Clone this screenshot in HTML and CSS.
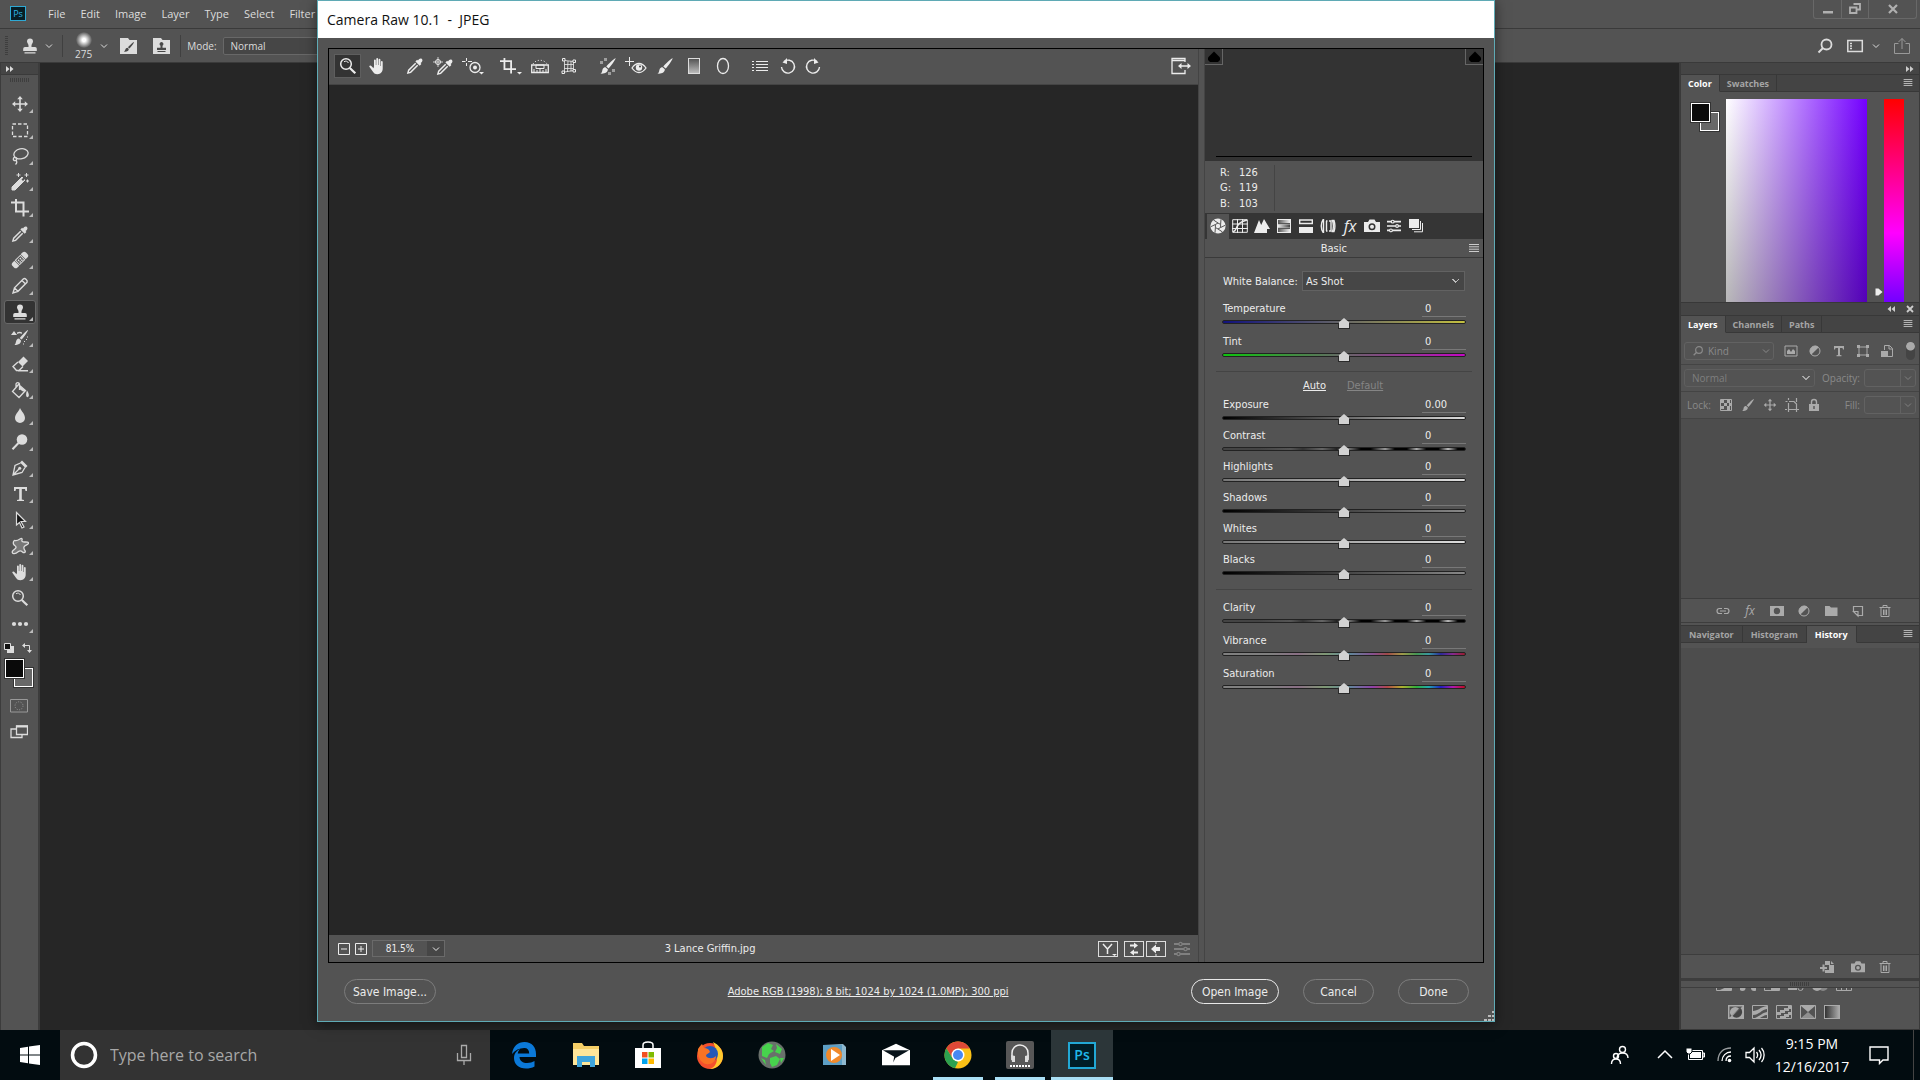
FILE: index.html
```html
<!DOCTYPE html>
<html lang="en">
<head>
  <meta charset="UTF-8" />
  <meta name="viewport" content="width=device-width, initial-scale=1.0" />
  <title>Camera Raw 10.1 - JPEG</title>
  <link rel="stylesheet" href="styles.css">
</head>
<body>
  <!-- shared icons -->
  <svg class="sprite" aria-hidden="true">
    <defs>
      <linearGradient id="g-right"><stop offset="0" stop-color="#eee"/><stop offset="1" stop-color="#444"/></linearGradient>
      <linearGradient id="g-left"><stop offset="0" stop-color="#555"/><stop offset="1" stop-color="#eee"/></linearGradient>
    </defs>
    <symbol id="i-chev" viewBox="0 0 8 8"><path d="M1 2.500l3 3 3-3" fill="none" stroke="currentColor"/></symbol>
    <symbol id="i-menu" viewBox="0 0 10 8"><path d="M0 .5h10M0 2.800h10M0 5.200h10M0 7.500h10" stroke="currentColor"/></symbol>
    <symbol id="i-fwd" viewBox="0 0 8 6"><path d="M0 0l3.500 3L0 6zM4 0l3.500 3L4 6z"/></symbol>
    <symbol id="i-stamp" viewBox="0 0 18 18"><path d="M9 1.500a3 3 0 0 1 3 3c0 1.600-1.500 2.300-1.500 4v1.500H14a1.800 1.800 0 0 1 1.800 1.800V14H2.200v-2.200A1.800 1.800 0 0 1 4 10h3.500V8.500c0-1.700-1.500-2.400-1.500-4a3 3 0 0 1 3-3zM3.500 15.300h11v1.300h-11z"/></symbol>
    <symbol id="i-move" viewBox="0 0 18 18"><path d="M9 1l2.800 3.200H9.800v4h4v-2L17 9l-3.200 2.800v-2h-4v4h2L9 17l-2.800-3.200h2v-4h-4v2L1 9l3.200-2.800v2h4v-4h-2z"/></symbol>
    <symbol id="i-drop" viewBox="0 0 18 18"><path d="M12 3.500c1-1.600 2.500-2.600 3.900-1.500 1.300 1.300.3 3-1.300 4.100l.8.900-1.700 1.700L9.400 4.400l1.700-1.700z"/><path d="M9.700 6.200l-7 7-.8 2.800 2.700-.6 7.100-7.100" fill="none" stroke="currentColor" stroke-width="1.500"/></symbol>
    <symbol id="i-hand" viewBox="0 0 18 18"><path d="M6 9.500V3.300a.9.9 0 0 1 1.800 0V8h.5V1.800a.9.9 0 0 1 1.800 0V8h.5V2.700a.9.9 0 0 1 1.800 0V9h.5V5a.9.9 0 0 1 1.800 0v6.500c0 3.400-2 5.700-5.200 5.700-2.600 0-3.900-1.300-5.100-3.300L1.200 9.500c.3-1.300 1.600-1.200 2.400-.3L5.500 11.200z"/></symbol>
    <symbol id="i-zoom" viewBox="0 0 18 18"><circle cx="7" cy="7" r="5.300" fill="none" stroke="currentColor" stroke-width="1.500"/><path d="M10.800 11l5.500 5.300" stroke="currentColor" stroke-width="2.200"/><path d="M5 4.800c1.500-1.200 3.700-.7 4.400 1.200" fill="none" stroke="currentColor"/></symbol>
    <symbol id="i-crop" viewBox="0 0 18 18"><path d="M0 3.500h12.500v14M5 0v12.500h13" fill="none" stroke="currentColor" stroke-width="2"/></symbol>
    <symbol id="i-brush" viewBox="0 0 18 18"><path d="M16.600 1.200c.6.500-5 8.600-7 10.300L7.300 9.400C9 7.300 16 .7 16.600 1.200zM6.500 10.200l2.300 2.100c.2 3-3.200 4.900-7.400 4.300 2.200-1.200 1.500-3 2.300-4.700.6-1.200 1.600-1.700 2.800-1.700z"/></symbol>
    <symbol id="i-trash" viewBox="0 0 14 14"><path d="M1.500 3.500h11M5 3V1.500h4V3M3 4v8.500h8V4M5.500 5.500V11M7 5.500V11M8.500 5.500V11" fill="none" stroke="currentColor"/></symbol>
    <symbol id="i-half" viewBox="0 0 14 14"><circle cx="7" cy="7" r="5" fill="none" stroke="currentColor"/><path d="M3.200 10.800A5.400 5.400 0 0 1 10.800 3.200z"/></symbol>
    <symbol id="i-sliders" viewBox="0 0 18 16"><path d="M1 3h5M9 3h8M1 8h10M14 8h3M1 13h3M7 13h10" stroke="currentColor" stroke-width="1.800"/><g fill="none" stroke="currentColor" stroke-width="1.300"><circle cx="7.500" cy="3" r="1.600"/><circle cx="12.500" cy="8" r="1.600"/><circle cx="5.500" cy="13" r="1.600"/></g></symbol>
    <symbol id="i-camera" viewBox="0 0 16 14"><path fill-rule="evenodd" d="M0 3h4l1.500-2.500h5L12 3h4v10H0zM8 4.300a3.500 3.500 0 1 0 0 7 3.500 3.500 0 0 0 0-7zm0 1.500a2 2 0 1 1 0 4 2 2 0 0 1 0-4z"/></symbol>
  </svg>

  <div class="desktop">
    <div class="app">
      <header class="menubar">
        <span class="ps-logo">Ps</span>
        <nav class="menus">
          <a href="#">File</a><a href="#">Edit</a><a href="#">Image</a><a href="#">Layer</a><a href="#">Type</a><a href="#">Select</a><a href="#">Filter</a>
        </nav>
        <div class="win-controls">
          <button aria-label="Minimize"><svg viewBox="0 0 12 12"><path d="M1 8h10v2.500H1z"/></svg></button>
          <button aria-label="Restore"><svg viewBox="0 0 12 12"><path d="M4.500 1h6.500v5.500H8M1 4.500h6.500v5.500H1z" fill="none" stroke="currentColor" stroke-width="1.800"/></svg></button>
          <button class="wide" aria-label="Close"><svg viewBox="0 0 12 12"><path d="M2 2l8 8M10 2l-8 8" stroke="currentColor" stroke-width="2.200"/></svg></button>
        </div>
      </header>

      <div class="options">
        <span class="grip-v"></span>
        <button class="opt-stamp" aria-label="Clone stamp presets"><svg class="ico"><use href="#i-stamp"/></svg><svg class="chev"><use href="#i-chev"/></svg></button>
        <span class="opt-sep"></span>
        <button class="opt-size" aria-label="Brush size"><span class="brush-size"><span class="brush-dot"></span>275</span><svg class="chev"><use href="#i-chev"/></svg></button>
        <button class="opt-tab" aria-label="Brush panel"><svg viewBox="0 0 18 18"><path d="M0 1h8l1.500 2H17v14H0z"/><path d="M14 5c.4.400-3 5.300-4.700 6.500L8 10.200C9.400 8.600 13.600 4.600 14 5zM7.500 10.800l1.300 1.300c0 2-2.300 3-4.900 2.600 1.600-.8 1.200-3.700 3.600-3.900z" fill="#484848"/></svg></button>
        <button class="opt-tab" aria-label="Clone source panel"><svg viewBox="0 0 18 18"><path d="M0 1h8l1.500 2H17v14H0z"/><path d="M8.500 5a2 2 0 0 1 1 3.700v2H13V13H4v-2.300h3.500v-2A2 2 0 0 1 8.500 5zM4.500 14h8v1h-8z" fill="#484848"/></svg></button>
        <span class="opt-sep"></span>
        <label for="mode">Mode:</label>
        <select id="mode" class="opt-mode"><option>Normal</option></select>
        <div class="opt-right">
          <button aria-label="Search"><svg class="ico" viewBox="0 0 18 18"><circle cx="10.500" cy="7.500" r="5" fill="none" stroke="currentColor" stroke-width="1.800"/><path d="M7 11l-4.500 4.500" stroke="currentColor" stroke-width="2"/></svg></button>
          <button class="opt-space" aria-label="Workspace"><svg class="ico" viewBox="0 0 18 18"><path d="M1.800 3.500h14.500v11H1.800z" fill="none" stroke="currentColor" stroke-width="1.500"/><path d="M4 6.500h2M4 9h2M4 11.500h2" stroke="currentColor" stroke-width="1.500"/></svg><svg class="chev"><use href="#i-chev"/></svg></button>
          <button class="dim" aria-label="Share"><svg class="ico" viewBox="0 0 18 18"><path d="M5.500 6.500h-4v10h15v-10h-4M9 12V1.500M5.500 5L9 1.500 12.500 5" fill="none" stroke="currentColor"/></svg></button>
        </div>
      </div>

      <div class="workspace">
        <aside class="toolbar">
          <button class="collapse" aria-label="Expand toolbar"><svg><use href="#i-fwd"/></svg></button>
          <span class="grip-h"></span>
          <div class="tools">
            <button aria-label="Move"><svg class="ico"><use href="#i-move"/></svg></button>
            <button aria-label="Marquee"><svg class="ico" viewBox="0 0 18 18"><path d="M1.500 3h15v12.500h-15z" fill="none" stroke="currentColor" stroke-width="1.300" stroke-dasharray="3.500 2"/></svg></button>
            <button aria-label="Lasso"><svg class="ico" viewBox="0 0 18 18"><g fill="none" stroke="currentColor" stroke-width="1.300"><ellipse cx="10" cy="6.800" rx="7.200" ry="5" transform="rotate(-12 10 6.800)"/><circle cx="4" cy="12" r="1.700"/><path d="M4.500 13.500c2 .5 1.500 2.500 0 4"/></g></svg></button>
            <button aria-label="Magic wand"><svg class="ico" viewBox="0 0 18 18"><path d="M11 4l3 3L4 17H1v-3zM7.500 0v4M5.500 2h4M15.500 0v4M13.500 2h4M16.500 6.500v3M15 8h3" stroke="currentColor" stroke-width="1"/><path d="M10.500 6.500l1.500 1.500L14 6l-1.500-1.500z" fill="#535353"/></svg></button>
            <button aria-label="Crop"><svg class="ico"><use href="#i-crop"/></svg></button>
            <button aria-label="Eyedropper"><svg class="ico"><use href="#i-drop"/></svg></button>
            <button aria-label="Healing brush"><svg class="ico" viewBox="0 0 18 18"><g transform="rotate(-45 9 9)"><path d="M2 5.500h2.500v7H2A2.500 2.500 0 0 1-.500 10V8A2.500 2.500 0 0 1 2 5.500zM16 5.500h-2.500v7H16a2.500 2.500 0 0 0 2.500-2.500V8A2.500 2.500 0 0 0 16 5.500z"/><path d="M5.500 6h7v6h-7z" fill="none" stroke="currentColor"/><path d="M7 7.500h1.500V9H7zM9.500 7.500H11V9H9.500zM7 9.700h1.500v1.500H7zM9.500 9.700H11v1.500H9.500z"/></g></svg></button>
            <button aria-label="Pencil"><svg class="ico" viewBox="0 0 18 18"><path d="M2 16l1.500-5.200 9-9c1.500-1 4.500 1.700 3.500 3.500l-9 9zM11 3.500L14.500 7M3.500 11L7 14.300" fill="none" stroke="currentColor" stroke-width="1.400"/></svg></button>
            <button class="on" aria-label="Clone stamp"><svg class="ico"><use href="#i-stamp"/></svg></button>
            <button aria-label="History brush"><svg class="ico" viewBox="0 0 18 18"><path d="M17 1c.5.500-4.500 8-6.500 9.500L8.700 9C10.300 7 16.500.5 17 1zM8 9.500l2 2c0 3-2.500 4.500-6.500 4.500 2.200-1.500.5-6 4.500-6.500zM0 6l3-4 3 4zM6 3.500c2-1.300 4-.8 5 0v1.300c-2-.9-3.500-.7-5 .2zM13 12h1v1h-1zM15 10h1v1h-1zM12 14.500h1v1h-1zM16 7.500h1v1h-1z"/></svg></button>
            <button aria-label="Eraser"><svg class="ico" viewBox="0 0 18 18"><path d="M7 7l5.500-5.500L17 6l-5.500 5.500z"/><path d="M7 7L2 11.500 5.500 15.500H8l4-4M7 15.800h10" fill="none" stroke="currentColor" stroke-width="1.400"/></svg></button>
            <button aria-label="Paint bucket"><svg class="ico" viewBox="0 0 18 18"><path d="M7.500 3.500l7 6-6.500 7-6.500-6zM5 6V3a1.800 1.800 0 0 1 3.500 0v6" fill="none" stroke="currentColor" stroke-width="1.300"/><path d="M9 5l6 5-3 .5-3-2zM16 9.500c2 3 2.500 5.500 1 6.500-1.800.8-2.700-2-1-6.500z"/></svg></button>
            <button aria-label="Blur"><svg class="ico" viewBox="0 0 18 18"><path d="M9 1c2 4 5 6.300 5 10a5 5 0 0 1-10 0c0-3.700 3.500-6 5-10z"/></svg></button>
            <button aria-label="Dodge"><svg class="ico" viewBox="0 0 18 18"><circle cx="11" cy="6.500" r="5.300"/><path d="M7.500 10l-6 6.300" stroke="currentColor" stroke-width="2"/></svg></button>
            <button aria-label="Pen"><svg class="ico" viewBox="0 0 18 18"><path d="M11 1.500L16.500 7l-2 2L9 3.500z"/><path d="M9.500 4L4 6.500 2 16l9-2.500L14 8.500M2.500 15.500L8 10" fill="none" stroke="currentColor" stroke-width="1.300"/><circle cx="8.700" cy="9.300" r="1.500"/></svg></button>
            <button aria-label="Type"><svg class="ico" viewBox="0 0 18 18"><path d="M3 2h13v4h-1.500L14 4h-3.200v10.500l2.200.4V16H6v-1.100l2.200-.4V4H5l-.5 2H3z"/></svg></button>
            <button aria-label="Path selection"><svg class="ico" viewBox="0 0 18 18"><path d="M5.500 1.500l9 9H10l3 5.500-2 1-2.500-5.500-3 2.500z" fill="#161616" stroke="currentColor" stroke-width="1.200"/></svg></button>
            <button aria-label="Custom shape"><svg class="ico" viewBox="0 0 18 18"><path d="M4 3.500c1.500.5 3.500-.5 5-1.500s2.500-.5 2 1 .5 2 2.500 2 4-.2 4 1.200-3 2-4 3-.5 3 .5 4.500-1 2.700-2.500 1.300-2.500-1.800-4-.5-3 2.300-4.500 2.200S.5 15 2 13.500s3.500-2 3-3.500-2-1.500-2.500-3S2.800 3.200 4 3.500z" fill="#777" stroke="currentColor" stroke-width="1.300"/></svg></button>
            <button aria-label="Hand"><svg class="ico"><use href="#i-hand"/></svg></button>
            <button class="plain" aria-label="Zoom"><svg class="ico"><use href="#i-zoom"/></svg></button>
            <button aria-label="Edit toolbar"><svg class="ico" viewBox="0 0 18 18"><circle cx="3" cy="9" r="2.100"/><circle cx="9" cy="9" r="2.100"/><circle cx="15" cy="9" r="2.100"/></svg></button>
          </div>
          <div class="swatch-tools">
            <button aria-label="Default colors"><svg viewBox="0 0 10 10"><path d="M3 3h7v7H3z"/><path d="M.5.500h6v6h-6z" fill="#111" stroke="#ddd"/></svg></button>
            <button aria-label="Swap colors"><svg viewBox="0 0 10 10"><path d="M2 2.500h5.500V8" fill="none" stroke="currentColor"/><path d="M0 2.500L3 0v5zM7.500 10L5 7h5z"/></svg></button>
          </div>
          <div class="swatches"><button class="fg" aria-label="Foreground color"></button><button class="bg" aria-label="Background color"></button></div>
          <button class="screen-btn dim" aria-label="Quick mask"><svg class="ico" viewBox="0 0 18 18"><path d="M.5 2.500h17v12.500H.5z" fill="none" stroke="currentColor"/><circle cx="9" cy="8.800" r="4" fill="none" stroke="currentColor" stroke-dasharray="1 1.500"/></svg></button>
          <button class="screen-btn" aria-label="Screen mode"><svg class="ico" viewBox="0 0 18 18"><path d="M6.500 3h11v8.500h-11zM6 6H1v8.500h11V12" fill="none" stroke="currentColor" stroke-width="1.300"/><path d="M6 2.500h12v2H6z"/></svg></button>
        </aside>

        <main class="canvas"></main>

        <aside class="panels">
          <div class="dock-head"><svg><use href="#i-fwd"/></svg></div>
          <div class="tabs"><button class="on">Color</button><button>Swatches</button><span class="fill"></span><svg class="menu-ico"><use href="#i-menu"/></svg></div>
          <div class="color-panel">
            <div class="swatches"><button class="fg" aria-label="Foreground"></button><button class="bg" aria-label="Background"></button></div>
            <div class="field"></div>
            <svg class="hue-mark" viewBox="0 0 8 8"><path d="M.5.500h3L7.500 4l-4 3.500h-3z"/></svg>
            <div class="hue"></div>
          </div>
          <div class="dock-head two"><svg class="flip"><use href="#i-fwd"/></svg><svg viewBox="0 0 8 8"><path d="M1 1l6 6M7 1L1 7" stroke="currentColor" stroke-width="1.800"/></svg></div>
          <div class="tabs"><button class="on">Layers</button><button>Channels</button><button>Paths</button><span class="fill"></span><svg class="menu-ico"><use href="#i-menu"/></svg></div>
          <div class="layer-row filter-row">
            <button class="kind"><svg viewBox="0 0 18 18"><circle cx="10.500" cy="7.500" r="5" fill="none" stroke="currentColor" stroke-width="1.800"/><path d="M7 11l-4.500 4.500" stroke="currentColor" stroke-width="2"/></svg>Kind<svg class="chev"><use href="#i-chev"/></svg></button>
            <div class="filters">
              <button aria-label="Pixel layers"><svg viewBox="0 0 14 14"><path d="M1 2h12v10H1z" fill="none" stroke="currentColor"/><path d="M3 10V7l2-2 2 3 2-3 2 2v3z"/></svg></button>
              <button aria-label="Adjustment layers"><svg><use href="#i-half"/></svg></button>
              <button aria-label="Type layers"><svg viewBox="0 0 14 14"><path d="M2 2h10v3.500h-1L10.500 4H8v7l1.500.3v1h-5v-1L6 11V4H3.500L3 5.500H2z"/></svg></button>
              <button aria-label="Shape layers"><svg viewBox="0 0 14 14"><path d="M3 3h8v8H3z" fill="none" stroke="currentColor"/><path d="M1 1h3v3H1zM10 1h3v3h-3zM1 10h3v3H1zM10 10h3v3h-3z"/></svg></button>
              <button aria-label="Smart objects"><svg viewBox="0 0 14 14"><path d="M4.500 6V1.500h5l3 3v8H8M9 1.500V5h3.500" fill="none" stroke="currentColor"/><path d="M1 7h7v6H1z"/></svg></button>
            </div>
            <span class="toggle"></span>
          </div>
          <div class="layer-row">
            <select class="blend" aria-label="Blend mode"><option>Normal</option></select>
            <label for="opacity">Opacity:</label>
            <span class="num"><input id="opacity" type="text"><svg class="chev"><use href="#i-chev"/></svg></span>
          </div>
          <div class="layer-row">
            <span class="lock-label">Lock:</span>
            <div class="locks">
              <button aria-label="Lock transparency"><svg viewBox="0 0 14 14"><path d="M1.500 1.500h11v11h-11z" fill="none" stroke="currentColor"/><path d="M2 2h3v3H2zM8 2h3v3H8zM5 5h3v3H5zM10 5h2v3h-2zM2 8h3v3H2zM8 8h3v4H8z"/></svg></button>
              <button aria-label="Lock pixels"><svg><use href="#i-brush"/></svg></button>
              <button aria-label="Lock position"><svg><use href="#i-move"/></svg></button>
              <button aria-label="Lock artboard"><svg viewBox="0 0 14 14"><path d="M3.500 0v2M.500 3.500h2M3.500 5v6.500h8V6L9 3.500H4M11.500 0v4M3.500 12v2M11.500 12v2M12 11.500h2M0 11.500h2" fill="none" stroke="currentColor" stroke-width="1.200"/></svg></button>
              <button aria-label="Lock all"><svg viewBox="0 0 14 14"><path fill-rule="evenodd" d="M2 6h10v7H2zm4.300 2v3h1.400V8z"/><path d="M4.500 6V4a2.500 2.500 0 0 1 5 0v2" fill="none" stroke="currentColor" stroke-width="1.400"/></svg></button>
            </div>
            <label class="fill-label" for="fill">Fill:</label>
            <span class="num"><input id="fill" type="text"><svg class="chev"><use href="#i-chev"/></svg></span>
          </div>
          <div class="layer-list"></div>
          <div class="panel-foot">
            <button aria-label="Link layers"><svg viewBox="0 0 14 14"><path d="M6 4.500H3.500a2.500 2.500 0 0 0 0 5H6M8 4.500h2.500a2.500 2.500 0 0 1 0 5H8M4 7h6" fill="none" stroke="currentColor" stroke-width="1.200"/></svg></button>
            <button class="fx" aria-label="Layer style">fx</button>
            <button aria-label="Layer mask"><svg viewBox="0 0 14 14"><path fill-rule="evenodd" d="M0 2h14v10H0zM7 3.800a3.200 3.200 0 1 0 0 6.400 3.200 3.200 0 0 0 0-6.400z"/></svg></button>
            <button aria-label="Adjustment layer"><svg><use href="#i-half"/></svg></button>
            <button aria-label="New group"><svg viewBox="0 0 14 14"><path d="M1 2h4.500L7 3.500h6.500V12H1z"/></svg></button>
            <button aria-label="New layer"><svg viewBox="0 0 14 14"><path d="M2.500 7V2.500h9v9H7M2.500 7.500H7V12z" fill="none" stroke="currentColor" stroke-width="1.200"/></svg></button>
            <button aria-label="Delete layer"><svg><use href="#i-trash"/></svg></button>
          </div>
          <div class="tabs gap-top"><button>Navigator</button><button>Histogram</button><button class="on">History</button><span class="fill"></span><svg class="menu-ico"><use href="#i-menu"/></svg></div>
          <div class="history-list"></div>
          <div class="panel-foot history-foot">
            <button class="new-doc" aria-label="New document from state"><svg viewBox="0 0 14 14"><path d="M5 1h5v4h4v8H5v-3h4V5H5zM11 1l3 3h-3z"/><path d="M0 8h7M3.500 4.500v7" stroke="currentColor" stroke-width="2"/></svg></button>
            <button aria-label="New snapshot"><svg><use href="#i-camera"/></svg></button>
            <button aria-label="Delete state"><svg><use href="#i-trash"/></svg></button>
          </div>
          <div class="dock-grip"><span class="grip-h"></span></div>
          <div class="adjustments">
            <div class="adj-row">
              <svg viewBox="0 0 16 14"><path d="M.5.500h15v13H.5z" fill="none" stroke="currentColor"/><path d="M4 13l11-5v5z"/></svg>
              <svg viewBox="0 0 16 14"><circle cx="2.500" cy="11" r="3"/><circle cx="14" cy="11" r="3"/></svg>
              <svg viewBox="0 0 16 14"><path d="M.5.500h15v13H.5z" fill="none" stroke="currentColor"/><path d="M7 5h8v8H7z"/></svg>
              <svg viewBox="0 0 16 14"><path d="M0 11h9v2H0z"/><circle cx="12.500" cy="11" r="2.500" fill="none" stroke="currentColor"/></svg>
              <svg viewBox="0 0 16 14"><circle cx="5" cy="9" r="5"/><circle cx="11" cy="9" r="5" opacity=".6"/></svg>
              <svg viewBox="0 0 16 14"><path d="M.5.500h15v13H.5zM5.500 0v14M10.500 0v14M0 7h16" fill="none" stroke="currentColor"/></svg>
            </div>
            <div class="adj-row">
              <svg viewBox="0 0 16 14"><path fill-rule="evenodd" d="M0 0h16v14H0zM1.500 1.500v11L14.500 1.500z"/><path d="M3.500 11A5 5 0 0 1 11 3.500z"/><path d="M12.500 3A5.500 5.500 0 0 1 4.500 11z" fill="#444"/></svg>
              <svg viewBox="0 0 16 14"><path d="M.5.500h15v13H.5z" fill="none" stroke="currentColor"/><path d="M1 6c5 0 7-4 14-5v3C9 5 7 10 1 10zM3 13c5-2 7-5 12-6v3c-3 0-5 2-7 3z"/></svg>
              <svg viewBox="0 0 16 14"><path d="M.5.500h15v13H.5z" fill="none" stroke="currentColor"/><path d="M1 7h3V5h4V3h4V1h3v3h-2v2H9v2H5v2H1zM4 13v-2h4V9h4V7h3v3h-2v2h-3v1z"/></svg>
              <svg viewBox="0 0 16 14"><path d="M.5.500h15v13H.5z" fill="none" stroke="currentColor"/><path d="M1 1h14L8 7z"/><path d="M1 13h14L8 7z" opacity=".7"/></svg>
              <span class="grad-map"></span>
            </div>
          </div>
        </aside>
      </div>

      <!-- Camera Raw dialog -->
      <section class="dialog" aria-label="Camera Raw">
        <h1 class="dialog-title">Camera Raw 10.1&nbsp; -&nbsp; JPEG</h1>
        <div class="frame">
          <div class="preview">
            <div class="raw-tools">
              <div class="group">
                <button class="on" aria-label="Zoom"><svg class="ico"><use href="#i-zoom"/></svg></button>
                <button aria-label="Hand"><svg class="ico"><use href="#i-hand"/></svg></button>
              </div>
              <div class="group">
                <button aria-label="White balance"><svg class="ico"><use href="#i-drop"/></svg></button>
                <button aria-label="Color sampler"><svg class="ico wide" viewBox="0 0 22 18"><use href="#i-drop" x="3" y="1" width="18" height="18"/><circle cx="5" cy="5" r="2.500" fill="none" stroke="currentColor"/><path d="M5 0v10M0 5h10" stroke="currentColor" stroke-width=".8"/></svg></button>
                <button aria-label="Targeted adjustment"><svg class="ico wide" viewBox="0 0 22 18"><path d="M4.500 1v3M4.500 6v3M0 4.500h3.500M6 4.500h4" stroke="currentColor"/><circle cx="13" cy="10.500" r="5" fill="none" stroke="currentColor" stroke-width="1.300"/><circle cx="13" cy="10.500" r="2"/><path d="M17 15h5l-2.500 2.500z"/></svg></button>
              </div>
              <div class="group">
                <button aria-label="Crop"><svg class="ico wide" viewBox="0 0 22 18"><use href="#i-crop" y="1" width="16" height="16"/><path d="M17 15h5l-2.500 2.500z"/></svg></button>
                <button aria-label="Straighten"><svg class="ico" viewBox="0 0 18 18"><path d="M.7 8h16.600v7.500H.7z" fill="none" stroke="currentColor" stroke-width="1.300"/><path d="M5 8h8v3.500H5zM3 12v3M6 13v2M9 12v3M12 13v2M15 12v3" fill="none" stroke="currentColor"/><path d="M2 7C5 2 13 2 16 7" fill="none" stroke="currentColor" stroke-dasharray="1 2"/></svg></button>
                <button aria-label="Transform"><svg class="ico" viewBox="0 0 18 18"><path d="M4.500 3.500l9 1v9l-9 1.500zM8 4L7.500 15M11 4v10.500M4.500 7.500h9M4.500 11.500h9" fill="none" stroke="currentColor" stroke-width=".8"/><path d="M2.500 1.500H5v2.500H2.500zM13 3h2.500v2.500H13zM2 14h2.500v2.500H2zM13 12.500h2.500V15H13z" fill="#535353" stroke="currentColor"/></svg></button>
              </div>
              <div class="group">
                <button aria-label="Spot removal"><svg class="ico" viewBox="0 0 18 18"><use href="#i-brush" x="1"/><path d="M2 4h3v3H2zM6 1h3v3H6zM14 12h3v3h-3zM10 15h3v3h-3z" opacity=".5"/></svg></button>
                <button aria-label="Red eye"><svg class="ico wide" viewBox="0 0 22 18"><path d="M4.500 0v9M0 4.500h9" stroke="currentColor"/><path d="M7 11c4-6 10-6 14 0-4 6-10 6-14 0z" fill="none" stroke="currentColor" stroke-width="1.300"/><circle cx="14" cy="10.500" r="3.200"/><circle cx="15" cy="9.500" r="1" fill="#444"/></svg></button>
                <button aria-label="Adjustment brush"><svg class="ico"><use href="#i-brush"/></svg></button>
                <button aria-label="Graduated filter"><span class="grad-ico"></span></button>
                <button aria-label="Radial filter"><svg class="ico" viewBox="0 0 18 18"><ellipse cx="9" cy="9" rx="5.500" ry="7.500" fill="none" stroke="currentColor" stroke-width="1.300"/></svg></button>
              </div>
              <div class="group">
                <button class="mid" aria-label="Preferences"><svg class="ico" viewBox="0 0 18 18"><path d="M1 4.500h2M5 4.500h12M1 7.500h2M5 7.500h12M1 10.500h2M5 10.500h12M1 13.500h2M5 13.500h12" stroke="currentColor" stroke-width="1.200"/></svg></button>
                <button aria-label="Rotate left"><svg class="ico" viewBox="0 0 18 18"><path d="M5 4.500A6.500 6.500 0 1 1 2.500 10" fill="none" stroke="currentColor" stroke-width="1.400"/><path d="M3.500 5.500L8 1v6z"/></svg></button>
                <button class="tight" aria-label="Rotate right"><svg class="ico" viewBox="0 0 18 18"><path d="M13 4.500A6.500 6.500 0 1 0 15.500 10" fill="none" stroke="currentColor" stroke-width="1.400"/><path d="M14.500 5.500L10 1v6z"/></svg></button>
              </div>
              <button class="full" aria-label="Full screen"><svg class="ico wide" viewBox="0 0 20 18"><path d="M14 5V1.500H1v15h13V13M1 3.500h13M8 9h9" fill="none" stroke="currentColor" stroke-width="1.300"/><path d="M7 9l3.500-3v6zM20 9l-3.500-3v6z"/></svg></button>
            </div>
            <div class="image-area"></div>
            <div class="status">
              <div class="zoom-ctl">
                <button class="step" aria-label="Zoom out"><svg viewBox="0 0 12 12"><path d="M.5.500h11v11H.5zM3 6h6" fill="none" stroke="currentColor"/></svg></button>
                <button class="step" aria-label="Zoom in"><svg viewBox="0 0 12 12"><path d="M.5.500h11v11H.5zM3 6h6M6 3v6" fill="none" stroke="currentColor"/></svg></button>
                <span class="zoom-box"><input type="text" value="81.5%" aria-label="Zoom level"><button aria-label="Zoom presets"><svg class="chev"><use href="#i-chev"/></svg></button></span>
              </div>
              <span class="file-name">3 Lance Griffin.jpg</span>
              <div class="compare">
                <button class="boxed" aria-label="Before and after view"><svg viewBox="0 0 18 14"><path d="M4 2l4.500 5v5M13 2L8.500 7" fill="none" stroke="currentColor" stroke-width="1.500"/><path d="M13 12h5l-2.500 2z"/></svg></button>
                <button class="boxed" aria-label="Swap settings"><svg viewBox="0 0 18 14"><path d="M5 2.500h4V.5l4 3-4 3v-2H5zM13 9.500H9v-2l-4 3 4 3v-2h4z"/></svg></button>
                <button class="boxed" aria-label="Copy settings"><svg viewBox="0 0 18 14"><path d="M9 0v2M9 12v2" stroke="currentColor"/><path d="M4 7l5-4.500V5h4v4H9v2.500z"/></svg></button>
                <button class="off" aria-label="Toggle settings"><svg><use href="#i-sliders"/></svg></button>
              </div>
            </div>
          </div>

          <div class="side">
            <div class="histogram">
              <button class="clip" aria-label="Shadow clipping"><svg viewBox="0 0 16 14"><path d="M8 1.500l6 6v2.500l-2 2H4l-2-2V7.500z" fill="#000"/></svg></button>
              <button class="clip right" aria-label="Highlight clipping"><svg viewBox="0 0 16 14"><path d="M8 1.500l6 6v2.500l-2 2H4l-2-2V7.500z" fill="#000"/></svg></button>
              <div class="base-line"></div>
            </div>
            <div class="readout">
              <dl>
                <dt>R:</dt><dd>126</dd>
                <dt>G:</dt><dd>119</dd>
                <dt>B:</dt><dd>103</dd>
              </dl>
            </div>
            <div class="raw-tabs">
              <button class="on" aria-label="Basic"><svg viewBox="0 0 16 16"><circle cx="8" cy="8" r="7.600"/><path d="M8 5L3.500 2M10.600 6.500L11 1.200M10.600 9.500l4.600-2.200M8 11l4.500 3M5.400 9.500L5 14.800M5.400 6.500L.8 8.700M8 5l2.600 1.500v3L8 11 5.400 9.500v-3z" fill="none" stroke="#535353"/></svg></button>
              <button aria-label="Tone curve"><svg viewBox="0 0 16 14"><path d="M.7.700h14.600v12.600H.7zM5.500 0v14M10.500 0v14M0 5h16M0 9.500h16" fill="none" stroke="currentColor"/><path d="M1 13c3-1 3-4 5-7s5-4 9-5" fill="none" stroke="currentColor" stroke-width="1.500"/></svg></button>
              <button aria-label="Detail"><svg viewBox="0 0 16 14"><path d="M0 14L5 1l2.200 5L10 0l6 10h-3v4z"/></svg></button>
              <button aria-label="HSL"><svg viewBox="0 0 16 14"><path d="M1 0h14v14H1z"/><path d="M2 1h12v3H2zM2 10h12v3H2z" fill="url(#g-left)"/><path d="M2 5.500h12v3H2z" fill="url(#g-right)"/><path d="M2 4.700h12M2 9.300h12" stroke="#353535"/></svg></button>
              <button aria-label="Split toning"><svg viewBox="0 0 16 14"><path d="M1.700 1h12.600v3.500H1.700z" fill="none" stroke="currentColor" stroke-width="1.400"/><path d="M1 8h14v6H1z"/></svg></button>
              <button aria-label="Lens corrections"><svg viewBox="0 0 16 14"><path d="M3.500 0C.5 4 .5 10 3.500 14V0zM6 2h1.500M6 12h1.500M6.500 2v10M9 2h2v10H9M12.500 1.500h1.500c1 3 1 8 0 11h-1.500c1-3 1-8 0-11z" fill="none" stroke="currentColor" stroke-width="1.400"/></svg></button>
              <button class="fx" aria-label="Effects">fx</button>
              <button aria-label="Calibration"><svg><use href="#i-camera"/></svg></button>
              <button aria-label="Presets"><svg><use href="#i-sliders"/></svg></button>
              <button aria-label="Snapshots"><svg viewBox="0 0 16 14"><path d="M1 0h10v9H1z"/><path d="M12.500 2v8.500H4M14.500 4v8.800H6" fill="none" stroke="currentColor"/></svg></button>
            </div>
            <h2 class="side-title"><span>Basic</span><svg class="menu-ico"><use href="#i-menu"/></svg></h2>

            <form class="basic">
              <div class="wb"><label for="wb">White Balance:</label><select id="wb"><option>As Shot</option></select></div>
              <div class="set roomy">
                <div class="slider"><label for="temp">Temperature</label><input type="text" value="0" aria-label="Temperature value"><input class="t-temp" id="temp" type="range" min="-100"></div>
                <div class="slider"><label for="tint">Tint</label><input type="text" value="0" aria-label="Tint value"><input class="t-tint" id="tint" type="range" min="-100"></div>
              </div>
              <div class="presets"><a href="#">Auto</a><a href="#" class="off">Default</a></div>
              <div class="set">
                <div class="slider"><label for="expo">Exposure</label><input type="text" value="0.00" aria-label="Exposure value"><input class="t-expo" id="expo" type="range" min="-100"></div>
                <div class="slider"><label for="contrast">Contrast</label><input type="text" value="0" aria-label="Contrast value"><input class="t-wave" id="contrast" type="range" min="-100"></div>
                <div class="slider"><label for="high">Highlights</label><input type="text" value="0" aria-label="Highlights value"><input class="t-light" id="high" type="range" min="-100"></div>
                <div class="slider"><label for="shadow">Shadows</label><input type="text" value="0" aria-label="Shadows value"><input class="t-dark" id="shadow" type="range" min="-100"></div>
                <div class="slider"><label for="whites">Whites</label><input type="text" value="0" aria-label="Whites value"><input class="t-light" id="whites" type="range" min="-100"></div>
                <div class="slider"><label for="blacks">Blacks</label><input type="text" value="0" aria-label="Blacks value"><input class="t-dark" id="blacks" type="range" min="-100"></div>
              </div>
              <div class="set roomy last">
                <div class="slider"><label for="clarity">Clarity</label><input type="text" value="0" aria-label="Clarity value"><input class="t-wave" id="clarity" type="range" min="-100"></div>
                <div class="slider"><label for="vib">Vibrance</label><input type="text" value="0" aria-label="Vibrance value"><input class="t-vib" id="vib" type="range" min="-100"></div>
                <div class="slider"><label for="sat">Saturation</label><input type="text" value="0" aria-label="Saturation value"><input class="t-sat" id="sat" type="range" min="-100"></div>
              </div>
            </form>
          </div>
        </div>

        <footer class="dialog-foot">
          <button class="pill">Save Image...</button>
          <a class="workflow" href="#">Adobe RGB (1998); 8 bit; 1024 by 1024 (1.0MP); 300 ppi</a>
          <div class="actions">
            <button class="pill main">Open Image</button>
            <button class="pill">Cancel</button>
            <button class="pill">Done</button>
          </div>
        </footer>
        <svg class="resize" viewBox="0 0 10 10"><path d="M8 0h2v2H8zM4 4h3v2H4zM8 4h2v2H8zM0 8h3v2H0zM4 8h3v2H4zM8 8h2v2H8z"/></svg>
      </section>
    </div>

    <footer class="taskbar">
      <button class="start" aria-label="Start"><svg viewBox="0 0 20 20"><path d="M0 3l8-1.200v7.700H0zM9 1.600L20 0v9.500H9zM0 10.500h8v7.700L0 17zM9 10.500h11V20L9 18.400z"/></svg></button>
      <label class="search"><svg viewBox="0 0 28 28"><circle cx="14" cy="14" r="11.500" fill="none" stroke="#fff" stroke-width="3.500"/></svg><input type="text" placeholder="Type here to search" aria-label="Search"><svg class="mic" viewBox="0 0 16 22"><path d="M5.500 1.500h5v12h-5zM1.500 9v7.500h13V9M8 16.500V21" fill="none" stroke="currentColor" stroke-width="1.300"/></svg></label>
      <div class="apps">
        <button aria-label="Edge"><svg viewBox="0 0 28 28"><path d="M2 13C3 5 8 1 14.500 1 22 1 26 6 26 13v3H9.500c.3 4 3.500 6 7.500 6 3 0 5.500-.8 7.500-2v5.500C22 27 19 27.500 16 27.500 8.500 27.500 4 23 4 17c0-4 2.500-7.500 6-9-1.500 1.500-2 3-2.300 4.500h11.500c0-3.500-1.700-5.500-5-5.500C9.500 7 5 9 2 13z" fill="#0b79d8"/></svg></button>
        <button aria-label="File Explorer"><svg viewBox="0 0 28 28"><path d="M1 2h9l2 3h15v19H1z" fill="#f5cf67"/><path d="M1 8h26v16H1z" fill="#ffe699"/><path d="M5 15h18v11h-5v-5h-8v5H5z" fill="#3fa5dc"/></svg></button>
        <button aria-label="Store"><svg viewBox="0 0 28 28"><path d="M9 8V4c0-4 10-4 10 0v4" fill="none" stroke="#fff" stroke-width="1.500"/><path d="M1 7h26v20H1z" fill="#fff"/><path d="M8 11h5.500v5.500H8z" fill="#f25022"/><path d="M14.500 11H20v5.500h-5.500z" fill="#7fba00"/><path d="M8 17.500h5.500V23H8z" fill="#00a4ef"/><path d="M14.500 17.500H20V23h-5.500z" fill="#ffb900"/></svg></button>
        <button aria-label="Firefox"><svg viewBox="0 0 28 28"><circle cx="14" cy="15" r="13" fill="#f4502c"/><path d="M17 1c6 3 10 8 10 14 0 7-6 13-13 13 9-3 9-15 3-27z" fill="#ffca2e"/><circle cx="14" cy="13" r="8" fill="#2458b8"/><path d="M2 8c2-3 3-4 4-5l2 4c3 0 5 1 6 4-2 2-4 2-4 4 2 3 7 3 10 0 0 6-5 9-10 8S1 16 2 8z" fill="#f97325"/></svg></button>
        <button aria-label="Globe"><svg viewBox="0 0 28 28"><circle cx="14" cy="14" r="13.500" fill="#69706b"/><path d="M4 6l6-4 5 2-2 4 3 2-5 3-2 4-5-2zM18 3l6 5-2 5-5-2 2-4zM12 17l6-2 4 3-3 6-5 2-2-4zM3 17l4 2 1 5zM22 17h4l-3 5z" fill="#47d34d"/></svg></button>
        <button aria-label="Media Player"><svg viewBox="0 0 28 28"><path d="M3 4l20-1 3 3v18H6l-3-1z" fill="#8fb9cf"/><path d="M3 4h19v20H3z" fill="#5d9fc5"/><circle cx="14" cy="14" r="8" fill="#f18a2b"/><path d="M11 8l9 6-9 6z" fill="#fff"/></svg></button>
        <button aria-label="Mail"><svg viewBox="0 0 30 28"><path d="M0 9L15 2l15 7v16H0z" fill="#fff"/><path d="M1 9h28l-14 8zM15 16l-3 6 1-6z" fill="#07131a"/></svg></button>
        <button class="open" aria-label="Chrome"><svg viewBox="0 0 28 28"><circle cx="14" cy="14" r="13.500" fill="#fbc116"/><path d="M2.300 7.200A13.500 13.500 0 0 1 25.700 7.500H14L8.500 17z" fill="#df4937"/><path d="M2.300 7.200L9 18l5 3-3 6.200A13.500 13.500 0 0 1 2.300 7.200z" fill="#2ca150"/><circle cx="14" cy="14" r="6.500" fill="#fff"/><circle cx="14" cy="14" r="5" fill="#4788f2"/></svg></button>
        <button class="open" aria-label="Music"><svg viewBox="0 0 28 28"><rect width="28" height="28" rx="2" fill="#575757"/><path d="M6 19V12a8 8 0 0 1 16 0v7" fill="none" stroke="#eee" stroke-width="1.500"/><path d="M5 14l4 1v6H6zM23 14l-4 1v6h3z" fill="#ddd"/><path d="M4 25h20" stroke="#fff" stroke-width="2" stroke-dasharray="2 1"/></svg></button>
        <button class="open active" aria-label="Photoshop"><span class="ps-app">Ps</span></button>
      </div>
      <div class="tray">
        <button aria-label="People"><svg viewBox="0 0 20 20"><g fill="none" stroke="#fff" stroke-width="1.400"><circle cx="12.500" cy="4.500" r="3"/><path d="M7 14c0-4 2-6 5.500-6S18 10 18 13"/><circle cx="6" cy="11" r="2.500"/><path d="M1.500 19c0-3.500 1.500-5 4.500-5s4.500 1.500 4.500 5"/></g></svg></button>
        <button aria-label="Hidden icons"><svg viewBox="0 0 20 20"><path d="M3 13l7-7 7 7" fill="none" stroke="#fff" stroke-width="1.500"/></svg></button>
        <button aria-label="Battery"><svg viewBox="0 0 20 20"><path d="M3.500 5.500h14v9h-14zM18 8h1.500v4H18z" fill="none" stroke="#fff"/><path d="M5 7h11v6H5z"/><path d="M1 3h6v4l-2 2H3L1 7z" fill="#fff" stroke="#020c10"/></svg></button>
        <button aria-label="Wi-Fi"><svg viewBox="0 0 20 20"><g fill="none" stroke="#fff" stroke-width="1.300"><path d="M3 16C3 8 8 3 16 3" opacity=".6"/><path d="M7 16c0-5 4-9 9-9M11 16c0-3 2-5 5-5"/></g><circle cx="14.500" cy="15.500" r="1.800" fill="#fff"/></svg></button>
        <button aria-label="Volume"><svg viewBox="0 0 20 20"><path d="M1 7.500h3.500L9 3v14l-4.500-4.500H1zM11.500 7c1.500 2 1.500 4 0 6M14 5c2.500 3 2.500 7 0 10M16.500 3c3.500 4 3.500 10 0 14" fill="none" stroke="#fff" stroke-width="1.300"/></svg></button>
      </div>
      <div class="clock"><span>9:15 PM</span><span>12/16/2017</span></div>
      <button class="notify" aria-label="Notifications"><svg viewBox="0 0 20 20"><path d="M1 2h18v13h-5l-3.500 3.500V15H1z" fill="none" stroke="#fff" stroke-width="1.400"/></svg></button>
    </footer>
  </div>
</body>
</html>
```
FILE: styles.css
```css
* {
  box-sizing: border-box;
}
body {
  margin: 0;
  font-family: 'Open Sans', 'Noto Sans', sans-serif;
  font-size: 11px;
  color: #dcdcdc;
  background: #262626;
}
button, input, select {
  font: inherit;
  color: inherit;
  margin: 0;
  padding: 0;
  border: 0;
  border-radius: 0;
  background: none;
  outline: none;
}
button {
  display: flex;
  align-items: center;
  justify-content: center;
  flex: none;
}
svg {
  fill: currentColor;
  display: block;
  flex: none;
}
a {
  color: inherit;
}
input {
  min-width: 0;
}
select {
  appearance: none;
}
.sprite {
  position: absolute;
  width: 0;
  height: 0;
}
.ico {
  width: 18px;
  height: 18px;
}
.ico.wide {
  width: 22px;
}
.chev {
  width: 8px;
  height: 8px;
}
.dim {
  color: #999;
}
.desktop {
  height: 100vh;
  display: flex;
  flex-direction: column;
}
.app {
  flex: 1;
  min-height: 0;
  display: flex;
  flex-direction: column;
  position: relative;
}

/* menu bar */
.menubar {
  height: 28px;
  display: flex;
  align-items: center;
  background: #535353;
  padding: 0 3px 2px 10px;
}
.ps-logo {
  width: 16px;
  height: 15px;
  border: 1px solid #2fa9d4;
  background: #071e26;
  color: #2fb4e4;
  font-size: 9px;
  line-height: 13px;
  text-align: center;
}
.menus {
  display: flex;
  gap: 15px;
  margin-left: 22px;
}
.menus a {
  text-decoration: none;
}
.win-controls {
  display: flex;
  align-self: flex-start;
  margin-left: auto;
  border: 1px solid #686868;
  border-top: 0;
  border-radius: 0 0 3px 3px;
  color: #b0b0b0;
}
.win-controls button {
  width: 27px;
  height: 18px;
}
.win-controls button + button {
  border-left: 1px solid #686868;
}
.win-controls .wide {
  width: 48px;
}
.win-controls svg {
  width: 12px;
  height: 12px;
}

/* options bar */
.options {
  height: 35px;
  display: flex;
  align-items: center;
  background: #535353;
  border-top: 1px solid #3a3a3a;
  border-bottom: 1px solid #3a3a3a;
  font-size: 10px;
  padding: 0 9px 0 5px;
}
.grip-v {
  width: 3px;
  height: 20px;
  background: repeating-linear-gradient(#3e3e3e 0 1px, #535353 1px 2px);
}
.opt-stamp {
  gap: 6px;
  margin: 0 9px 0 13px;
}
.opt-sep {
  width: 1px;
  height: 22px;
  background: #404040;
}
.opt-size {
  gap: 8px;
  margin: 0 12px;
}
.brush-size {
  display: flex;
  flex-direction: column;
  align-items: center;
  line-height: 12px;
}
.brush-dot {
  width: 16px;
  height: 16px;
  border-radius: 50%;
  background: radial-gradient(#fff 15%, #535353 72%);
}
.opt-tab {
  margin-right: 15px;
}
.opt-tab svg {
  width: 18px;
  height: 18px;
}
.opt-tab + .opt-tab {
  margin-right: 9px;
}
.options label {
  margin: 0 6px;
}
.opt-mode {
  width: 130px;
  height: 18px;
  border: 1px solid #686868;
  border-radius: 2px;
  background: #464646;
  padding-left: 7px;
}
.opt-right {
  display: flex;
  gap: 12px;
  margin-left: auto;
}
.opt-space {
  gap: 8px;
  margin-right: 1px;
}

/* left toolbar */
.workspace {
  flex: 1;
  min-height: 0;
  display: flex;
}
.toolbar {
  width: 40px;
  background: #535353;
  border-left: 1px solid #3c3c3c;
  border-right: 2px solid #3c3c3c;
  display: flex;
  flex-direction: column;
}
.collapse {
  height: 12px;
  background: #454545;
  border-bottom: 1px solid #3a3a3a;
  justify-content: flex-start;
  padding-left: 5px;
}
.collapse svg, .dock-head svg {
  width: 8px;
  height: 6px;
}
.dock-head svg:last-child {
  height: 8px;
}
.grip-h {
  width: 20px;
  height: 4px;
  flex: none;
  background: repeating-linear-gradient(90deg, #3e3e3e 0 1px, #535353 1px 2px);
}
.toolbar > .grip-h {
  margin: 3px 0 10px 9px;
}
.tools button {
  width: 32px;
  height: 24px;
  margin: 0 0 2px 3px;
  border: 1px solid transparent;
  border-radius: 3px;
  position: relative;
}
.tools .on {
  background: #333;
  border-color: #686868;
}
.tools button::after {
  content: "";
  position: absolute;
  right: 2px;
  bottom: 2px;
  border: 2px solid #bbb;
  border-top-color: transparent;
  border-left-color: transparent;
}
.tools .plain::after {
  display: none;
}
.swatch-tools {
  display: flex;
  gap: 8px;
  margin: 5px 0 0 3px;
}
.swatch-tools svg {
  width: 10px;
  height: 10px;
}
.swatches {
  display: grid;
  grid-template-columns: 9px 10px 9px;
  grid-template-rows: 9px 10px 9px;
  flex: none;
}
.toolbar .swatches {
  margin: 6px 0 6px 4px;
}
.swatches button {
  border: 1px solid #fff;
  outline: 1px solid #333;
}
.fg {
  grid-area: 1 / 1 / 3 / 3;
  background: #0a0a0a;
  z-index: 1;
}
.bg {
  grid-area: 2 / 2 / 4 / 4;
  background: #686868;
}
.screen-btn {
  width: 36px;
  height: 26px;
}
.canvas {
  flex: 1;
  background: #262626;
}

/* right panels */
.panels {
  width: 241px;
  display: flex;
  flex-direction: column;
  background: #535353;
  border-left: 2px solid #3a3a3a;
  border-right: 1px solid #3a3a3a;
  color: #aaa;
  font-size: 10px;
}
.dock-head {
  height: 12px;
  flex: none;
  display: flex;
  align-items: center;
  justify-content: flex-end;
  gap: 11px;
  padding-right: 5px;
  background: #454545;
  border-bottom: 1px solid #383838;
  color: #ccc;
}
.dock-head.two {
  height: 13px;
}
.flip {
  transform: scaleX(-1);
}
.tabs {
  height: 17px;
  flex: none;
  display: flex;
  background: #444;
}
.tabs button {
  padding: 0 7px;
  font-size: 9px;
  font-weight: 700;
  color: #a5a5a5;
  border-right: 1px solid #383838;
  border-bottom: 1px solid #383838;
}
.tabs .on {
  background: #535353;
  border-bottom-color: #535353;
  color: #fff;
}
.gap-top button, .color-tabs button {
  padding: 0 8px;
}
.tabs .fill {
  flex: 1;
  border-bottom: 1px solid #383838;
}
.menu-ico {
  width: 10px;
  height: 8px;
  color: #ccc;
}
.tabs .menu-ico {
  width: 16px;
  height: 17px;
  padding: 4px 6px 5px 0;
  border-bottom: 1px solid #383838;
}
.color-panel {
  height: 211px;
  flex: none;
  display: flex;
  align-items: flex-start;
  padding: 7px 15px 0 10px;
  border-bottom: 1px solid #383838;
}
.color-panel .swatches {
  margin: 4px 7px 0 0;
}
.field {
  flex: 1;
  align-self: stretch;
  background: linear-gradient(transparent, rgba(0, 0, 0, .28)), linear-gradient(90deg, #fff, #7300ff);
}
.hue-mark {
  width: 8px;
  height: 8px;
  margin: 189px 1px 0 8px;
  color: #eee;
}
.hue {
  width: 20px;
  align-self: stretch;
  background: linear-gradient(#f00, #f0f 66%, #7300ff);
}
.layer-row {
  height: 27px;
  flex: none;
  display: flex;
  align-items: center;
  padding: 0 3px;
  border-bottom: 1px solid #444;
}
.filter-row {
  height: 32px;
  padding-top: 4px;
}
.kind {
  width: 90px;
  height: 18px;
  border: 1px solid #626262;
  border-radius: 3px;
  justify-content: flex-start;
  gap: 4px;
  padding: 0 3px 0 7px;
  color: #8a8a8a;
}
.kind svg:first-child {
  width: 12px;
  height: 12px;
}
.kind .chev {
  margin-left: auto;
}
.filters {
  display: flex;
  gap: 10px;
  margin-left: 10px;
}
.panels .filters svg, .locks svg, .panel-foot svg {
  width: 14px;
  height: 14px;
}
.toggle {
  width: 9px;
  height: 18px;
  margin: 0 1px 0 auto;
  border-radius: 5px;
  background: radial-gradient(circle at 50% 4px, #aaa 4px, #444 5px);
}
.blend {
  flex: 1;
  height: 18px;
  border: 1px solid #626262;
  border-radius: 3px;
  padding-left: 7px;
  color: #8a8a8a;
}
.layer-row label, .lock-label {
  color: #8a8a8a;
}
.layer-row label {
  margin: 0 4px 0 7px;
}
.num {
  width: 52px;
  height: 18px;
  display: flex;
  align-items: center;
  border: 1px solid #626262;
  border-radius: 3px;
  color: #808080;
}
.num input {
  width: 36px;
  height: 16px;
  border-right: 1px solid #626262;
  margin-right: 3px;
}
.lock-label {
  margin-left: 3px;
}
.locks {
  display: flex;
  gap: 8px;
  margin-left: 8px;
}
.layer-row .fill-label {
  margin-left: auto;
}
.layer-list {
  height: 179px;
  flex: none;
  background: #4d4d4d;
}
.panel-foot {
  height: 25px;
  flex: none;
  display: flex;
  align-items: center;
  justify-content: flex-end;
  gap: 13px;
  padding-right: 27px;
  border-top: 1px solid #3d3d3d;
  border-bottom: 1px solid #3d3d3d;
}
.panel-foot .fx {
  width: 14px;
  font-size: 12px;
}
.fx {
  font-family: 'Open Sans', sans-serif;
  font-style: italic;
}
.gap-top {
  margin-top: 2px;
  border-top: 1px solid #383838;
  height: 18px;
}
.history-list {
  flex: 1;
  margin-top: 5px;
  background: #4d4d4d;
}
.history-foot .new-doc {
  margin-right: 4px;
}
.dock-grip {
  height: 9px;
  flex: none;
  display: flex;
  align-items: center;
  justify-content: center;
  border-top: 2px solid #3d3d3d;
  border-bottom: 1px solid #3d3d3d;
}
.adjustments {
  height: 42px;
  flex: none;
  overflow: hidden;
  display: flex;
  flex-direction: column;
  align-items: center;
  justify-content: flex-end;
  gap: 14px;
  padding: 0 32px 10px 0;
  border-bottom: 1px solid #383838;
}
.adj-row {
  display: flex;
  gap: 8px;
}
.adj-row svg, .grad-map {
  width: 16px;
  height: 14px;
}
.grad-map {
  border: 1px solid #aaa;
  background: linear-gradient(90deg, #333, #aaa);
}

/* camera raw dialog floats over the workspace */
.dialog {
  position: absolute;
  inset: 0 425px 8px 317px;
  display: flex;
  flex-direction: column;
  background: #535353;
  border: 1px solid #5faab5;
  box-shadow: 0 2px 12px rgba(0, 0, 0, .5);
  font-family: 'DejaVu Sans Condensed', 'DejaVu Sans', sans-serif;
  font-size: 11px;
  color: #ececec;
}
.dialog-title {
  height: 37px;
  flex: none;
  margin: 0;
  padding-left: 9px;
  background: #fff;
  color: #111;
  font: 400 14px/37px 'Open Sans', sans-serif;
}
.frame {
  flex: 1;
  min-height: 0;
  display: flex;
  margin: 10px 10px 0;
  border: 1px solid #000;
}
.preview {
  flex: 1;
  display: flex;
  flex-direction: column;
  border-right: 1px solid #444;
}
.raw-tools {
  height: 36px;
  flex: none;
  display: flex;
  align-items: center;
  gap: 9px;
  padding: 0 6px 2px 4px;
  border-bottom: 1px solid #444;
}
.group {
  display: flex;
}
.group button {
  width: 29px;
  height: 24px;
}
.group .on {
  width: 27px;
  margin: 0 1px;
  background: #333;
  border: 1px solid #5e5e5e;
}
.group .mid {
  width: 27px;
}
.group .tight {
  width: 22px;
}
.raw-tools .full {
  margin-left: auto;
}
.grad-ico {
  width: 12px;
  height: 16px;
  border: 1px solid #ddd;
  background: linear-gradient(#555, #bbb);
}
.image-area {
  flex: 1;
  background: #262626;
}
.status {
  height: 27px;
  flex: none;
  display: grid;
  grid-template-columns: 3fr auto 4fr;
  align-items: center;
  padding: 0 7px 0 9px;
}
.zoom-ctl, .compare {
  display: flex;
  align-items: center;
}
.zoom-ctl {
  gap: 5px;
}
.step svg {
  width: 12px;
  height: 12px;
}
.zoom-box {
  display: flex;
  height: 17px;
  border: 1px solid #6a6a6a;
}
.zoom-box input {
  width: 54px;
  font-size: 10px;
  text-align: center;
}
.zoom-box button {
  width: 17px;
  background: #464646;
}
.compare {
  justify-content: flex-end;
  gap: 2px;
}
.boxed {
  border: 1px solid #ddd;
}
.boxed:first-child {
  margin-right: 4px;
}
.boxed svg {
  width: 18px;
  height: 14px;
}
.compare .off {
  color: #808080;
  margin-left: 5px;
}
.off svg {
  width: 18px;
  height: 16px;
}

/* adjustments column */
.side {
  width: 279px;
  flex: none;
  margin-left: 5px;
  border-left: 1px solid #444;
}
.histogram {
  height: 112px;
  background: #333;
  display: grid;
  grid-template-columns: auto auto;
  justify-content: space-between;
  align-content: space-between;
}
.clip {
  width: 18px;
  height: 16px;
  border: 1px solid #666;
  border-width: 0 1px 1px 0;
}
.clip.right {
  border-width: 0 0 1px 1px;
}
.clip svg {
  width: 16px;
  height: 14px;
}
.base-line {
  grid-column: 1 / 3;
  height: 1px;
  margin: 0 11px 4px;
  background: #000;
}
.readout {
  height: 52px;
  display: flex;
  padding: 4px 0 2px;
}
.readout dl {
  width: 70px;
  margin: 0;
  padding-left: 15px;
  display: grid;
  grid-template-columns: 19px 1fr;
  line-height: 15px;
  border-right: 1px solid #444;
}
.readout dd {
  margin: 0;
}
.raw-tabs {
  height: 26px;
  display: flex;
  align-items: flex-end;
  padding-left: 2px;
  background: #353535;
}
.raw-tabs button {
  width: 22px;
  height: 25px;
  padding-bottom: 2px;
}
.raw-tabs .on {
  background: #535353;
}
.raw-tabs svg {
  width: 16px;
  height: 14px;
}
.raw-tabs .on svg {
  height: 16px;
}
.raw-tabs .fx {
  font-size: 16px;
}
.side-title {
  height: 19px;
  margin: 0;
  display: grid;
  grid-template-columns: 7fr auto 8fr;
  align-items: center;
  padding-right: 4px;
  border-bottom: 1px solid #3a3a3a;
  font-size: 11px;
  font-weight: 400;
}
.side-title span {
  grid-column: 2;
}
.side-title .menu-ico {
  justify-self: end;
}
.basic {
  padding: 13px 11px 0;
}
.wb {
  display: flex;
  align-items: center;
  justify-content: space-between;
  padding: 0 7px;
}
.wb select {
  width: 163px;
  height: 20px;
  border: 1px solid #626262;
  background: #464646;
  padding-left: 3px;
}
.opt-mode, .blend, .wb select {
  background-image: linear-gradient(45deg, transparent 50%, #bbb 50% 65%, transparent 65%), linear-gradient(-45deg, transparent 50%, #bbb 50% 65%, transparent 65%);
  background-repeat: no-repeat;
  background-size: 4px 4px;
  background-position: right 8px center, right 4px center;
}
.blend {
  opacity: .8;
}
.set {
  padding: 2px 6px 7px;
}
.slider {
  display: grid;
  grid-template-columns: 1fr 44px;
  grid-template-rows: 17px 10px;
  height: 31px;
  line-height: 17px;
}
.roomy .slider {
  height: 33px;
}
.roomy {
  padding: 9px 6px 5px;
  border-bottom: 1px solid #444;
}
.last {
  border-top: 1px solid #444;
  border-bottom: 0;
}
.slider label {
  padding-left: 1px;
}
.slider input[type="text"] {
  width: 44px;
  height: 17px;
  padding-left: 3px;
  border-bottom: 1px solid #787878;
}
.slider input[type="range"] {
  grid-column: 1 / 3;
  appearance: none;
  width: 100%;
  height: 10px;
}
input[type="range"]::-webkit-slider-runnable-track {
  height: 4px;
  border: 1px solid #222;
  border-radius: 2px;
  background: var(--track);
}
input[type="range"]::-webkit-slider-thumb {
  appearance: none;
  width: 12px;
  height: 11px;
  margin-top: -3px;
  background: #d2d2d2;
  border: 1px solid #2a2a2a;
  border-top: 0;
  clip-path: polygon(50% 0, 100% 45%, 100% 100%, 0 100%, 0 45%);
}
.t-temp { --track: linear-gradient(90deg, #11117c, #666 50%, #c4c040); }
.t-tint { --track: linear-gradient(90deg, #0ec40e, #666 50%, #c407c4); }
.t-expo { --track: linear-gradient(90deg, #000, #666 50%, #ddd); }
.t-light { --track: linear-gradient(90deg, #777, #ddd); }
.t-dark { --track: linear-gradient(90deg, #000, #888); }
.t-wave { --track: linear-gradient(90deg, #444, #444 15%, #555 28%, #333 33%, #666 41%, #222 47%, #777 52%, #000 57% 61%, #999 67%, #000 71% 76%, #aaa 80%, #000 84% 89%, #bbb 93%, #000 97%); }
.t-vib { --track: linear-gradient(90deg, #808080 20%, #8a6f85 31%, #7f9874 42%, #5f899a 52%, #875090 62%, #a04a48 68%, #a09a4a 74%, #459654 80%, #3998a0 85%, #2a2a98 90%, #862a8f 95%, #981c2c); }
.t-sat { --track: linear-gradient(90deg, #808080 20%, #8a6f85 31%, #7f9874 42%, #5f899a 52%, #9040a8 62%, #b24a48 68%, #b0b030 74%, #2fae3c 80%, #20a8b0 85%, #1f1fc0 90%, #b018b0 95%, #c00c1c); }
.presets {
  display: flex;
  gap: 21px;
  padding: 6px 0 0 87px;
  line-height: 16px;
}
.presets .off {
  color: #858585;
}

/* dialog buttons */
.dialog-foot {
  height: 58px;
  flex: none;
  display: grid;
  grid-template-columns: 5fr auto 6fr;
  align-items: center;
  padding: 0 25px 1px 26px;
}
.pill {
  min-width: 71px;
  height: 25px;
  padding: 0 8px;
  border: 1px solid #7c7c7c;
  border-radius: 13px;
  font-size: 12px;
  justify-self: start;
}
.pill.main {
  border-color: #e8e8e8;
  padding: 0 10px;
}
.actions {
  display: flex;
  justify-content: flex-end;
  gap: 24px;
}
.resize {
  position: absolute;
  right: 0;
  bottom: 0;
  width: 10px;
  height: 10px;
  color: #bbb;
}

/* taskbar */
.taskbar {
  height: 50px;
  flex: none;
  display: flex;
  align-items: stretch;
  background: #020c10;
  color: #fff;
}
.start {
  width: 60px;
}
.start svg {
  width: 20px;
  height: 20px;
}
.search {
  width: 430px;
  display: flex;
  align-items: center;
  gap: 12px;
  padding: 0 18px 0 10px;
  background: #333;
}
.search svg {
  width: 28px;
  height: 28px;
}
.search .mic {
  width: 16px;
  height: 22px;
  color: #aaa;
}
.search input {
  flex: 1;
  font-size: 16px;
}
.search input::placeholder {
  color: #a8a8a8;
}
.apps {
  display: flex;
  margin-left: 3px;
}
.apps button {
  width: 62px;
  position: relative;
}
.apps svg {
  width: 28px;
  height: 28px;
}
.apps .open::after {
  content: "";
  position: absolute;
  left: 6px;
  right: 6px;
  bottom: 0;
  height: 3px;
  background: #a9dff5;
}
.apps .active {
  background: #2c3639;
}
.apps .active::after {
  left: 0;
  right: 0;
}
.ps-app {
  width: 28px;
  height: 27px;
  border: 2px solid #22a8d5;
  background: #001d26;
  color: #20b8ea;
  font-size: 14px;
  font-weight: 600;
  line-height: 22px;
}
.tray {
  display: flex;
  margin-left: auto;
}
.tray button {
  width: 30px;
}
.tray button:first-child {
  width: 60px;
}
.tray svg {
  width: 20px;
  height: 20px;
}
.clock {
  width: 84px;
  display: flex;
  flex-direction: column;
  align-items: center;
  justify-content: center;
  font-size: 14px;
  line-height: 23px;
}
.notify {
  width: 60px;
  margin-right: 6px;
  padding-right: 10px;
  border-right: 1px solid #444;
}
.notify svg {
  width: 20px;
  height: 20px;
}
```
